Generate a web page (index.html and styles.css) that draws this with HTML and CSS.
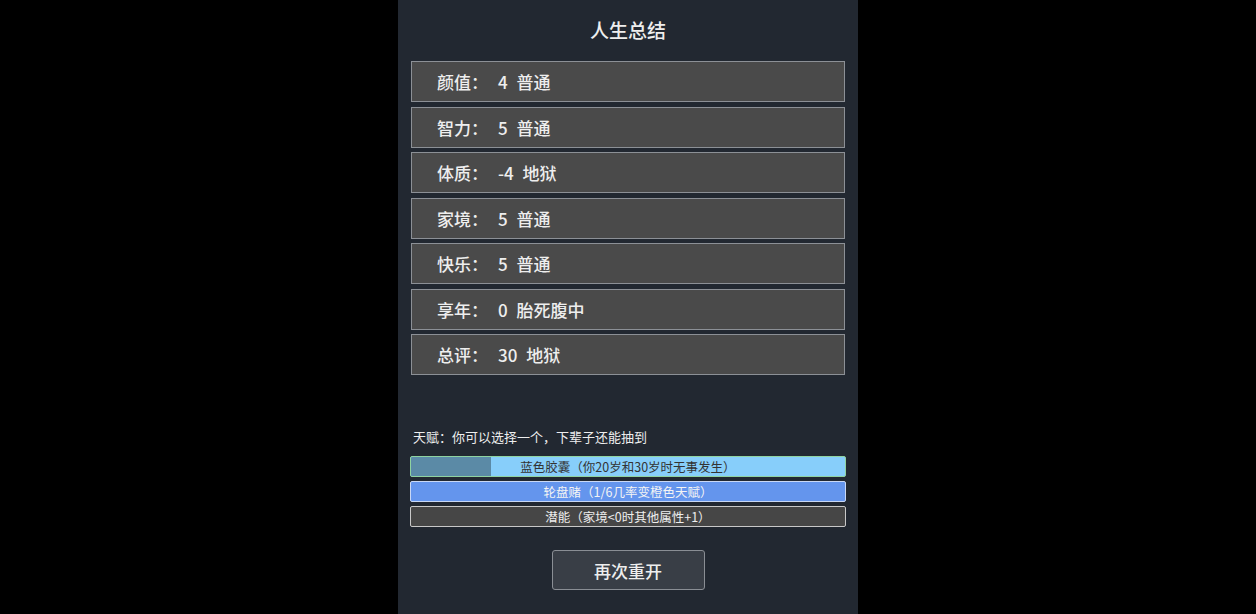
FILE: index.html
```html
<!DOCTYPE html>
<html>
<head>
    <meta charset="utf-8">
    <meta name="viewport" content="width=device-width, initial-scale=1.0">
    <link rel="stylesheet" href="styles.css">
</head>
<body>
    <div class="page">
        <div class="title">人生总结</div>
        <ul class="summary">
            <li><span class="label">颜值：</span><span class="value">4 普通</span></li>
            <li><span class="label">智力：</span><span class="value">5 普通</span></li>
            <li><span class="label">体质：</span><span class="value">-4 地狱</span></li>
            <li><span class="label">家境：</span><span class="value">5 普通</span></li>
            <li><span class="label">快乐：</span><span class="value">5 普通</span></li>
            <li><span class="label">享年：</span><span class="value">0 胎死腹中</span></li>
            <li><span class="label">总评：</span><span class="value">30 地狱</span></li>
        </ul>
        <div class="talent-tip">天赋：你可以选择一个，下辈子还能抽到</div>
        <ul class="talents">
            <li class="grade1 selected">
                <div class="progress" style="width: 18.5%"></div>
                <span>蓝色胶囊（你20岁和30岁时无事发生）</span>
            </li>
            <li class="grade2"><span>轮盘赌（1/6几率变橙色天赋）</span></li>
            <li class="grade0"><span>潜能（家境&lt;0时其他属性+1）</span></li>
        </ul>
        <div class="actions">
            <button class="restart">再次重开</button>
        </div>
    </div>
</body>
</html>
```

FILE: styles.css
```css
* {
    margin: 0;
    padding: 0;
    box-sizing: border-box;
}

html, body {
    width: 100%;
    height: 100%;
    overflow: hidden;
}

body {
    background: #000;
    display: flex;
    justify-content: center;
    font-family: "Noto Sans CJK SC", "Noto Sans", sans-serif;
    color: #eeeeee;
}

.page {
    width: 460px;
    height: 100%;
    background: #222831;
    padding: 0 13px;
    display: flex;
    flex-direction: column;
}

.title {
    text-align: center;
    font-size: 19px;
    font-weight: 500;
    line-height: 24px;
    padding-top: 18px;
    margin-bottom: 19px;
}

.summary {
    list-style: none;
    display: flex;
    flex-direction: column;
    gap: 4.5px;
}

.summary li {
    height: 41px;
    display: flex;
    align-items: center;
    padding-left: 25px;
    background: #4a4a4a;
    border: 1px solid #8c9096;
    font-size: 17px;
    font-weight: 500;
    color: #eeeeee;
}

.summary .label {
    width: 61px;
}

.summary .value {
    word-spacing: 5px;
}

.talent-tip {
    margin-top: 52px;
    padding-left: 2px;
    font-size: 13px;
    line-height: 20px;
    color: #eeeeee;
}

.talents {
    list-style: none;
    display: flex;
    flex-direction: column;
    gap: 4px;
    margin-top: 9px;
    margin-left: -1px;
    margin-right: -1px;
}

.talents li {
    position: relative;
    height: 21px;
    border: 1px solid #ddd;
    border-radius: 2px;
    font-size: 12.5px;
    line-height: 19px;
    text-align: center;
    overflow: hidden;
}

.talents li span {
    position: relative;
}

.talents .grade0 {
    background: #464646;
    color: #eeeeee;
    border-color: #c8c8c8;
}

.talents .grade1 {
    background: #87cefa;
    color: #333;
}

.talents .grade1.selected {
    border-color: #8fd3a0;
}

.talents .grade2 {
    background: #6495ed;
    color: #f4f4f4;
    border-color: #c9d8f5;
}

.talents .progress {
    position: absolute;
    left: 0;
    top: 0;
    bottom: 0;
    background: #5b8aa6;
}

.actions {
    display: flex;
    justify-content: center;
    margin-top: 23px;
}

.restart {
    width: 153px;
    height: 40px;
    background: #393e46;
    border: 1px solid #8a8e94;
    border-radius: 3px;
    color: #eeeeee;
    font-family: inherit;
    font-size: 17px;
    font-weight: 500;
}
```
